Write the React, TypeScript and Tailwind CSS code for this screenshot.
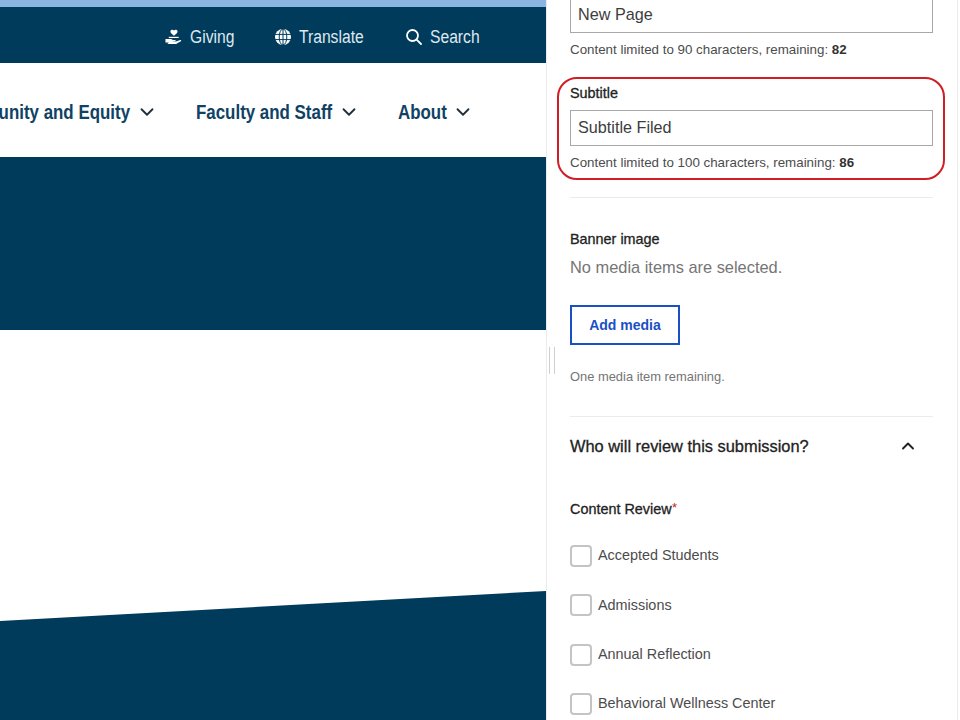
import { ChevronDown, ChevronUp } from "lucide-react";

const navItems = [
  { label: "Community and Equity", width: "w-[184px]", gap: "mr-[38px]" },
  { label: "Faculty and Staff", width: "w-[136px]", gap: "mr-[38px]" },
  { label: "About", width: "w-[48px]", gap: "mr-0" },
];

const reviewers = ["Accepted Students", "Admissions", "Annual Reflection", "Behavioral Wellness Center"];

function GivingIcon() {
  return (
    <svg width="17" height="16" viewBox="0 0 18 16" fill="#fff">
      <path d="M9.500 1c1.100-1.100 3.800-.9 3.800 1.300 0 1.800-2.300 3.200-3.800 4.300C8 5.500 5.700 4.100 5.700 2.300 5.700.1 8.400-.1 9.500 1z" />
      <path d="M4 7.800h10.500v1.300H4z" />
      <path d="M.5 10.200h5.700c.5 0 1 .2 1.400.5l.6.4h2.600c.7 0 .7 1.300 0 1.300H8.300v.4h3.200l4.700-1.700c.9-.3 1.400.8.600 1.300l-4.600 2.700c-.4.200-.7.300-1.100.3H2.500l1.500-1.700H.5z" />
    </svg>
  );
}

function GlobeIcon() {
  return (
    <svg width="16" height="16" viewBox="0 0 16 16" fill="none" stroke="#003b5c" strokeWidth="1">
      <circle cx="8" cy="8" r="8" fill="#fff" stroke="none" />
      <path d="M0 5.400h16M0 10.600h16M8 0v16" />
      <ellipse cx="8" cy="8" rx="3.800" ry="8" />
    </svg>
  );
}

function SearchIcon() {
  return (
    <svg width="16" height="16" viewBox="0 0 16 16" fill="none" stroke="#fff" strokeWidth="1.800" strokeLinecap="round">
      <circle cx="6.500" cy="6.500" r="5.500" />
      <path d="M10.600 10.600 15 15" />
    </svg>
  );
}

function TopLink({ icon, label, width }: { icon: React.ReactNode; label: string; width: string }) {
  return (
    <div className="flex items-center gap-2">
      {icon}
      <span className={`${width} origin-left scale-x-[0.87] whitespace-nowrap text-lg text-[#dfe8ef]`}>{label}</span>
    </div>
  );
}

function Hint({ limit, left }: { limit: number; left: number }) {
  return (
    <p className="text-[13.35px] leading-4 text-[#4c4c4c]">
      Content limited to {limit} characters, remaining: <b className="text-[#333]">{left}</b>
    </p>
  );
}

export default function App() {
  return (
    <div className="relative flex h-[720px] w-[960px] overflow-hidden bg-white font-['Liberation_Sans',sans-serif]">
      {/* Page preview */}
      <div className="flex w-[546px] shrink-0 flex-col overflow-hidden">
        <div className="h-[7px] bg-[#8ab4e3]" />
        <div className="flex h-[56px] items-center justify-end gap-[41px] bg-[#003b5c] pr-[66px] pt-[4px]">
          <TopLink icon={<GivingIcon />} label="Giving" width="w-[44px]" />
          <TopLink icon={<GlobeIcon />} label="Translate" width="w-[66px]" />
          <TopLink icon={<SearchIcon />} label="Search" width="w-[50px]" />
        </div>
        <div className="flex h-[94px] items-center justify-end whitespace-nowrap pr-[72px] pt-1">
          {navItems.map((item) => (
            <div key={item.label} className={`flex shrink-0 items-center gap-[6px] ${item.gap}`}>
              <span className={`${item.width} origin-left scale-x-[0.845] text-xl font-bold text-[#0f4264]`}>{item.label}</span>
              <ChevronDown size={22} color="#1f2f3a" strokeWidth={2} />
            </div>
          ))}
        </div>
        <div className="h-[173px] bg-[#003b5c]" />
        <div className="h-[261px]" />
        <svg className="block h-[129px] w-full" viewBox="0 0 546 129" preserveAspectRatio="none">
          <polygon points="0,30 546,0 546,129 0,129" fill="#003b5c" />
        </svg>
      </div>

      {/* Edit panel */}
      <div className="h-full w-[412px] shrink-0 overflow-hidden border-x border-[#ebebeb] pl-[23px] pr-[24px]">
        <div className="-mt-[3px] flex h-9 items-center border border-[#a8a8a8] px-[7px] pb-[2px] text-[16.2px] text-[#3d3d3d]">New Page</div>
        <div className="mt-[9px]">
          <Hint limit={90} left={82} />
        </div>
        <p className="mt-[27px] text-[14.4px] leading-4 text-[#222] [-webkit-text-stroke:0.3px_#222]">Subtitle</p>
        <div className="mt-[9px] flex h-9 items-center border border-[#a8a8a8] px-[7px] pb-[2px] text-[16.2px] text-[#3d3d3d]">Subtitle Filed</div>
        <div className="mt-[9px]">
          <Hint limit={100} left={86} />
        </div>
        <div className="mt-[26px] border-t border-[#ececec]" />

        <p className="mt-[33px] text-[14.4px] leading-4 text-[#222] [-webkit-text-stroke:0.3px_#222]">Banner image</p>
        <p className="mt-[10px] text-[16.4px] leading-5 text-[#757575]">No media items are selected.</p>
        <div className="mt-[28px] flex h-[40px] w-[110px] items-center justify-center border-2 border-[#1b4fc4] text-sm font-bold text-[#1b4fc4]">
          Add media
        </div>
        <p className="mt-[24px] text-[12.9px] leading-4 text-[#757575]">One media item remaining.</p>
        <div className="mt-[31px] border-t border-[#ececec]" />

        <div className="mt-[19px] flex h-5 items-center justify-between pr-[15px]">
          <span className="text-[16.4px] text-[#222] [-webkit-text-stroke:0.3px_#222]">Who will review this submission?</span>
          <ChevronUp size={20} color="#222" strokeWidth={2.25} />
        </div>
        <p className="relative mt-[45px] text-[14.4px] leading-4 text-[#222] [-webkit-text-stroke:0.3px_#222]">
          Content Review
          <span className="absolute left-[102px] -top-[1px] text-[13px] leading-4 text-[#c81e1e] [-webkit-text-stroke:0]">*</span>
        </p>
        <div className="mt-[28px] flex flex-col gap-[27.4px]">
          {reviewers.map((name) => (
            <div key={name} className="flex items-center gap-[6px]">
              <div className="h-[22px] w-[22px] rounded-[4px] border-2 border-[#c4c4c4]" />
              <span className="text-[14.4px] text-[#4c4c4c]">{name}</span>
            </div>
          ))}
        </div>
      </div>

      {/* Annotation ring round the subtitle field */}
      <div className="absolute left-[557px] top-[77px] h-[103px] w-[388px] rounded-[20px] border-[2.5px] border-[#cf1f25]" />

      {/* Panel resize handle */}
      <div className="absolute left-[549px] top-[347px] h-[27px] w-[6px] border-x border-[#cfcfcf]" />
    </div>
  );
}
